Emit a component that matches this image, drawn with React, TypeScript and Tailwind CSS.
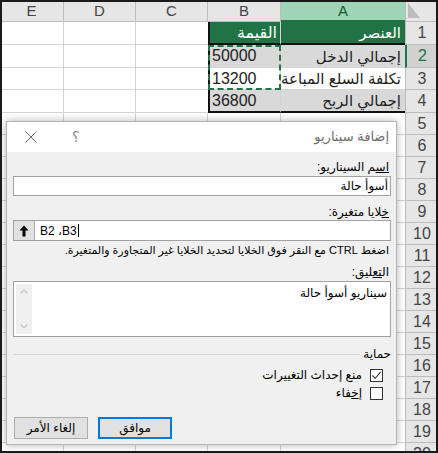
import React from "react";

const COLS = [64, 72, 72, 73, 124, 33];
const FONT = { fontFamily: '"Liberation Sans", "DejaVu Sans", sans-serif' };

function Cell({
  w,
  h,
  className = "",
  children,
}: {
  w: number;
  h: number;
  className?: string;
  children?: React.ReactNode;
}) {
  return (
    <div
      className={"shrink-0 flex items-center overflow-hidden " + className}
      style={{ width: w, height: h }}
    >
      {children}
    </div>
  );
}

function Sheet() {
  const rowHeights = [23, 23, 22, 23];
  const data: { a: string; b: string; kind: "head" | "gray" | "white" }[] = [
    { a: "العنصر", b: "القيمة", kind: "head" },
    { a: "إجمالي الدخل", b: "50000", kind: "gray" },
    { a: "تكلفة السلع المباعة", b: "13200", kind: "white" },
    { a: "إجمالي الربح", b: "36800", kind: "gray" },
  ];
  const grid = "border-r border-b border-[#d4d4d4]";
  const rows: React.ReactNode[] = [];
  data.forEach((d, i) => {
    const h = rowHeights[i];
    const bg =
      d.kind === "head"
        ? "bg-[#217346] text-white"
        : d.kind === "gray"
        ? "bg-[#d9d9d9] text-[#222]"
        : "bg-white text-[#222]";
    const bottom =
      i === 0 || i === 3 ? "border-b-2 border-b-[#111]" : "border-b border-b-[#d4d4d4]";
    rows.push(
      <div key={i} className="flex">
        <Cell w={COLS[0]} h={h} className={"bg-white " + grid} />
        <Cell w={COLS[1]} h={h} className={"bg-white " + grid} />
        <Cell w={COLS[2]} h={h} className={"bg-white border-b border-[#d4d4d4]"} />
        <Cell
          w={COLS[3]}
          h={h}
          className={
            bg +
            " border-l-2 border-l-[#111] border-r border-r-[#d4d4d4] " +
            bottom +
            (d.kind === "head" ? " justify-end pr-[3px]" : " justify-start pl-[2px]")
          }
        >
          <span className="text-[16px] leading-none" dir={d.kind === "head" ? "rtl" : "ltr"}>
            {d.b}
          </span>
        </Cell>
        <Cell
          w={COLS[4]}
          h={h}
          className={bg + " justify-end pr-[4px] " + bottom}
        >
          <span className="text-[15px] leading-none" dir="rtl">
            {d.a}
          </span>
        </Cell>
        <Cell
          w={COLS[5]}
          h={h}
          className={
            "justify-center border-b border-[#bdbdbd] " +
            (i === 1
              ? "bg-[#d2d2d2] text-[#217346] border-l-2 border-l-[#217346]"
              : "bg-[#e6e6e6] text-[#444] border-l border-l-[#bdbdbd]")
          }
        >
          <span className="text-[16px] font-light leading-none">{i + 1}</span>
        </Cell>
      </div>
    );
  });
  for (let r = 5; r <= 21; r++) {
    rows.push(
      <div key={r} className="flex">
        <Cell w={COLS[0]} h={22} className={"bg-white " + grid} />
        <Cell w={COLS[1]} h={22} className={"bg-white " + grid} />
        <Cell w={COLS[2]} h={22} className={"bg-white " + grid} />
        <Cell w={COLS[3]} h={22} className={"bg-white " + grid} />
        <Cell w={COLS[4]} h={22} className={"bg-white border-b border-[#d4d4d4]"} />
        <Cell
          w={COLS[5]}
          h={22}
          className="justify-center bg-[#e6e6e6] text-[#444] border-b border-l border-[#bdbdbd]"
        >
          <span className="text-[16px] leading-none">{r}</span>
        </Cell>
      </div>
    );
  }
  return (
    <div className="flex flex-col">
      <div className="flex">
        {["E", "D", "C", "B"].map((c, i) => (
          <Cell
            key={c}
            w={COLS[i]}
            h={22}
            className="justify-center bg-[#e6e6e6] text-[#444] border-r border-b border-[#bdbdbd]"
          >
            <span className="text-[15px] leading-none">{c}</span>
          </Cell>
        ))}
        <Cell
          w={COLS[4]}
          h={22}
          className="justify-center bg-[#9fd5b7] text-[#0e5c2f] border-b-2 border-b-[#217346]"
        >
          <span className="text-[15px] leading-none">A</span>
        </Cell>
        <Cell
          w={COLS[5]}
          h={22}
          className="items-end bg-[#e6e6e6] border-b border-l border-[#bdbdbd]"
        >
          <svg width="14" height="18" viewBox="0 0 14 18" className="ml-[1px] mb-[2px]">
            <polygon points="1,2 1,17 13,17" fill="#bdbdbd" />
          </svg>
        </Cell>
      </div>
      {rows}
    </div>
  );
}

function CloseIcon() {
  return (
    <svg width="12" height="12" viewBox="0 0 12 12">
      <line x1="0.5" y1="0.5" x2="11.5" y2="11.5" stroke="#6b6b6b" strokeWidth="1" />
      <line x1="11.5" y1="0.5" x2="0.5" y2="11.5" stroke="#6b6b6b" strokeWidth="1" />
    </svg>
  );
}

function Checkbox({ checked }: { checked: boolean }) {
  return (
    <div className="w-[13px] h-[13px] border border-[#333] bg-white flex items-center justify-center shrink-0">
      {checked && (
        <svg width="11" height="11" viewBox="0 0 11 11">
          <polyline points="1.5,5.5 4.2,8.3 9.8,1.8" fill="none" stroke="#333" strokeWidth="1.1" />
        </svg>
      )}
    </div>
  );
}

function Dialog() {
  return (
    <div
      className="absolute left-[4px] top-[119px] w-[391px] h-[324px] bg-[#f0f0f0] border border-[#b5b5b5] shadow-[0_0_8px_rgba(0,0,0,0.3)] flex flex-col text-[12px] text-black"
      style={FONT}
    >
      <div className="h-[30px] bg-white flex items-center justify-between shrink-0" dir="ltr">
        <div className="flex items-center">
          <div className="ml-[18px]">
            <CloseIcon />
          </div>
          <span className="ml-[35px] text-[14px] text-[#8a8a8a]">؟</span>
        </div>
        <span className="pr-[7px] text-[13px] text-[#6d6d6d]" dir="rtl">
          إضافة سيناريو
        </span>
      </div>
      <div className="flex flex-col pl-[6px] pr-[5px] pt-[8px]" dir="rtl">
        <div className="h-[14px] leading-[14px] pr-[2px]">
          <span className="underline">اس</span>م السيناريو:
        </div>
        <div className="mt-[2px] h-[20px] bg-white border border-[#a2a2a2] flex items-center pr-[2px]">
          أسوأ حالة
        </div>
        <div className="mt-[9px] h-[14px] leading-[14px] pr-[2px]">
          <span className="underline">خ</span>لايا متغيرة:
        </div>
        <div
          className="mt-[1px] h-[21px] bg-white border border-[#a2a2a2] flex items-center"
          dir="ltr"
        >
          <div className="w-[21px] h-full bg-[#e1e1e1] border-r border-[#adadad] flex items-center justify-center">
            <svg width="10" height="12" viewBox="0 0 10 12">
              <polygon points="5,0.5 9.5,5.5 6.5,5.5 6.5,11.5 3.5,11.5 3.5,5.5 0.5,5.5" fill="#000" />
            </svg>
          </div>
          <span className="ml-[5px] text-[12px]">B2 ،B3</span>
          <span className="w-[1px] h-[13px] bg-black ml-[1px]" />
        </div>
        <div className="mt-[2px] h-[14px] leading-[14px] pr-[2px] whitespace-nowrap text-[11px]">
          اضغط CTRL مع النقر فوق الخلايا لتحديد الخلايا غير المتجاورة والمتغيرة.
        </div>
        <div className="mt-[8px] h-[14px] leading-[14px] pr-[2px]">
          ال<span className="underline">تع</span>ليق:
        </div>
        <div
          className="mt-[2px] h-[56px] bg-white border border-[#a2a2a2] flex"
          dir="ltr"
        >
          <div className="m-[2px] w-[16px] bg-[#f0f0f0] flex flex-col items-center justify-between py-[5px]">
            <svg width="8" height="5" viewBox="0 0 8 5">
              <polyline points="0.5,4.5 4,1 7.5,4.5" fill="none" stroke="#c4c4c4" strokeWidth="1.2" />
            </svg>
            <svg width="8" height="5" viewBox="0 0 8 5">
              <polyline points="0.5,0.5 4,4 7.5,0.5" fill="none" stroke="#c4c4c4" strokeWidth="1.2" />
            </svg>
          </div>
          <div className="flex-1 text-right pr-[3px] pt-[2px]" dir="rtl">
            سيناريو أسوأ حالة
          </div>
        </div>
        <div className="mt-[10px] h-[14px] flex items-center">
          <span className="leading-[14px]">حماية</span>
          <div className="flex-1 mr-[3px] border-t border-[#d5d5d5]" />
        </div>
        <div className="mt-[7px] h-[14px] flex items-center pr-[8px]">
          <Checkbox checked />
          <span className="mr-[8px] leading-[14px]">منع إحداث التغييرات</span>
        </div>
        <div className="mt-[4px] h-[14px] flex items-center pr-[8px]">
          <Checkbox checked={false} />
          <span className="mr-[8px] leading-[14px]">
            إ<span className="underline">خ</span>فاء
          </span>
        </div>
        <div className="mt-[17px] flex gap-[10px] pl-[1px]" dir="ltr">
          <div className="w-[74px] h-[22px] bg-[#e1e1e1] border border-[#adadad] flex items-center justify-center">
            إلغاء الأمر
          </div>
          <div className="w-[74px] h-[22px] bg-[#e1e1e1] border-2 border-[#0078d7] flex items-center justify-center">
            موافق
          </div>
        </div>
      </div>
    </div>
  );
}

export default function App() {
  return (
    <div
      className="relative w-[438px] h-[453px] overflow-hidden bg-white border-2 border-[#1a1a1a]"
      style={FONT}
    >
      <div className="-mt-[2px] -ml-[2px]">
        <Sheet />
      </div>
      <div className="absolute left-[206px] top-[43px] w-[73px] h-[45px] border-2 border-dashed border-[#217346]" />
      <Dialog />
    </div>
  );
}
